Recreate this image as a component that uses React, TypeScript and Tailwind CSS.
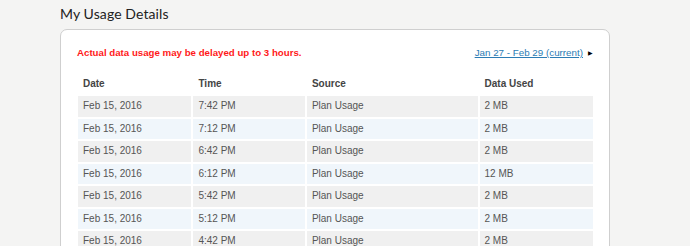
const rows = [
  { date: 'Feb 15, 2016', time: '7:42 PM', source: 'Plan Usage', used: '2 MB' },
  { date: 'Feb 15, 2016', time: '7:12 PM', source: 'Plan Usage', used: '2 MB' },
  { date: 'Feb 15, 2016', time: '6:42 PM', source: 'Plan Usage', used: '2 MB' },
  { date: 'Feb 15, 2016', time: '6:12 PM', source: 'Plan Usage', used: '12 MB' },
  { date: 'Feb 15, 2016', time: '5:42 PM', source: 'Plan Usage', used: '2 MB' },
  { date: 'Feb 15, 2016', time: '5:12 PM', source: 'Plan Usage', used: '2 MB' },
  { date: 'Feb 15, 2016', time: '4:42 PM', source: 'Plan Usage', used: '2 MB' },
];

const UsageDetails = (): JSX.Element => {
  return (
    <div className="h-[246px] w-[690px] overflow-hidden bg-[#f4f4f3] pl-[60px] font-['Liberation_Sans',Arial,sans-serif]">
      <h2 className="pt-[5px] text-[14px] leading-[17px] text-[#222] font-['Lato',sans-serif] tracking-[0.1px]">
        My Usage Details
      </h2>
      <div className="mt-[7px] h-[300px] w-[550px] rounded-[7px] border border-[#cfcfcf] bg-white">
        <div className="flex items-center justify-between pl-[16px] pr-[16px] pt-[17px]">
          <p className="text-[9.7px] font-bold leading-[12px] text-[#ff1a1a]">
            Actual data usage may be delayed up to 3 hours.
          </p>
          <div className="flex items-center gap-[5px]">
            <a href="#" className="text-[9.8px] leading-[12px] text-[#2c7cb4] underline">
              Jan 27 - Feb 29 (current)
            </a>
            <span className="text-[6px] leading-[6px] text-black">▶</span>
          </div>
        </div>
        <table className="ml-[15px] mt-[13px] w-[519px] table-fixed border-separate border-spacing-[2px] text-[10px] leading-[12px] text-[#555]">
          <colgroup>
            <col className="w-[113px]" />
            <col className="w-[111px]" />
            <col className="w-[170px]" />
            <col className="w-[113px]" />
          </colgroup>
          <thead>
            <tr>
              <th className="h-[20px] px-[5px] text-left font-bold text-[#444]">Date</th>
              <th className="h-[20px] px-[5px] text-left font-bold text-[#444]">Time</th>
              <th className="h-[20px] px-[5px] text-left font-bold text-[#444]">Source</th>
              <th className="h-[20px] px-[5px] text-left font-bold text-[#444]">Data Used</th>
            </tr>
          </thead>
          <tbody>
            {rows.map((r, i) => {
              const bg = i % 2 === 0 ? 'bg-[#f0f0f0]' : 'bg-[#f0f6fb]';
              return (
                <tr key={i}>
                  <td className={`h-[20.5px] px-[5px] ${bg}`}>{r.date}</td>
                  <td className={`h-[20.5px] px-[5px] ${bg}`}>{r.time}</td>
                  <td className={`h-[20.5px] px-[5px] ${bg}`}>{r.source}</td>
                  <td className={`h-[20.5px] px-[5px] ${bg}`}>{r.used}</td>
                </tr>
              );
            })}
          </tbody>
        </table>
      </div>
    </div>
  );
};

export default function App() {
  return <UsageDetails />;
}
